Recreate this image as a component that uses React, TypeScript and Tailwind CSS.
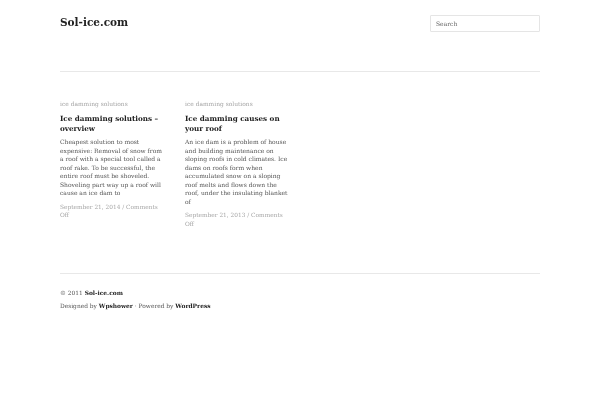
const font = "font-['DejaVu_Serif',serif]";

const posts = [
  {
    title: ["Ice damming solutions –", "overview"],
    body: "Cheapest solution to most expensive: Removal of snow from a roof with a special tool called a roof rake. To be successful, the entire roof must be shoveled. Shoveling part way up a roof will cause an ice dam to",
    date: "September 21, 2014",
  },
  {
    title: ["Ice damming causes on", "your roof"],
    body: "An ice dam is a problem of house and building maintenance on sloping roofs in cold climates. Ice dams on roofs form when accumulated snow on a sloping roof melts and flows down the roof, under the insulating blanket of",
    date: "September 21, 2013",
  },
];

export default function App() {
  return (
    <div className={`${font} w-[600px] h-[400px] bg-white overflow-hidden px-[60px] blur-[0.35px]`}>
      <header className="h-[72px] border-b border-[#e8e8e8] flex justify-between items-start pt-[14px]">
        <div className="text-[10.5px] leading-[16px] font-bold text-[#222]">Sol-ice.com</div>
        <div className="mt-[1px] w-[110px] h-[17px] border border-[#e5e5e5] rounded-[1px] px-[5px] text-[6px] leading-[15px] text-[#666]">Search</div>
      </header>
      <main className="flex gap-[21px] pt-[27px] h-[202px] border-b border-[#e8e8e8]">
        {posts.map((p) => (
          <article key={p.date} className="w-[104px]">
            <div className="text-[5.95px] leading-[10px] text-[#a5a5a5]">ice damming solutions</div>
            <h2 className="mt-[5px] text-[7.2px] leading-[10px] font-bold text-[#222]">
              {p.title[0]}<br />{p.title[1]}
            </h2>
            <p className="mt-[4px] text-[6px] leading-[8.53px] text-[#555]">{p.body}</p>
            <div className="mt-[5px] text-[5.85px] leading-[8.53px] text-[#a5a5a5]">{p.date} / Comments Off</div>
          </article>
        ))}
      </main>
      <footer className="pt-[14px] text-[5.9px] leading-[11px] text-[#555]">
        <div className="-mt-[1px]">© 2011 <b className="text-[#222]">Sol-ice.com</b></div>
        <div className="mt-[0.5px]">Designed by <b className="text-[#222]">Wpshower</b> · Powered by <b className="text-[#222]">WordPress</b></div>
      </footer>
    </div>
  );
}
